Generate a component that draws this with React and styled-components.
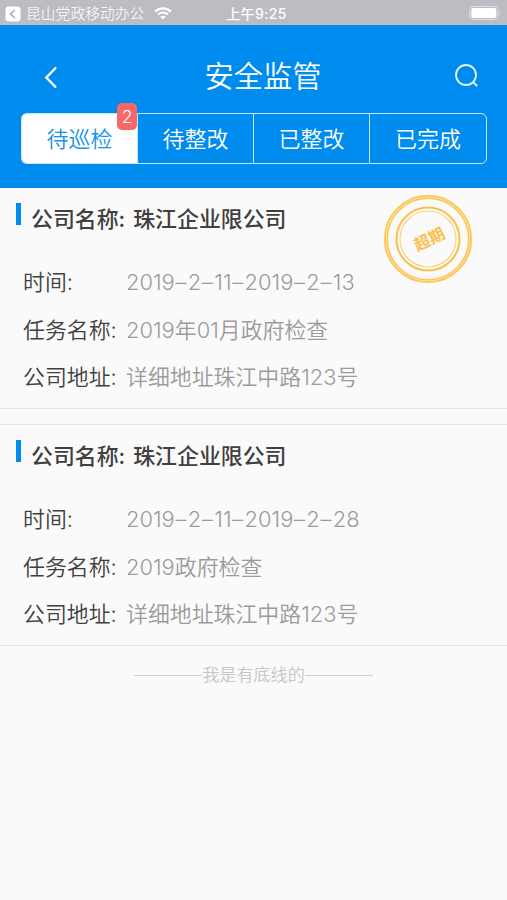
import React from 'react';
import styled, { createGlobalStyle } from 'styled-components';

const GlobalStyle = createGlobalStyle`
  * {
    box-sizing: border-box;
  }

  body {
    margin: 0;
    background: #fafafa;
    font-family: Inter, 'Noto Sans CJK SC', sans-serif;
    font-weight: 350;
  }
`

const Page = styled.div`
  min-height: 900px;
  background: #fafafa;
  overflow: hidden;
`

const StatusBar = styled.div`
  display: grid;
  grid-template-columns: 1fr auto 1fr;
  align-items: center;
  height: 25px;
  padding: 2px 4px 0 5px;
  background: #bdbcc2;
  color: #fff;
  font-size: 14.8px;
  line-height: 22px;
`

const BackToApp = styled.div`
  display: flex;
  align-items: center;
  color: #f3f3f5;

  span {
    margin: 0 10px 0 5px;
    white-space: nowrap;
  }
`

const Clock = styled.div`
  font-size: 14px;
  font-weight: 500;
  letter-spacing: 0.4px;
  padding-left: 5px;
`

const BatteryIcon = styled.svg`
  justify-self: end;
  margin-top: -1px;
`

const Header = styled.header`
  height: 163px;
  padding: 28px 20px 0 21px;
  background: #008cee;
  color: #fff;
`

const NavBar = styled.div`
  display: flex;
  align-items: center;
  justify-content: space-between;
  height: 46px;
  padding: 1px 7px 0 22px;
`

const Title = styled.h1`
  margin: 1px 0 0 13px;
  font-size: 29.3px;
  font-weight: 350;
  line-height: 46px;
`

const Tabs = styled.div`
  display: grid;
  grid-template-columns: 115px 116px 116px 1fr;
  height: 51px;
  margin-top: 14px;
  border: 1px solid #c4e7ff;
  border-radius: 6px;
`

const Tab = styled.button`
  position: relative;
  padding: 0;
  border: 0;
  border-left: ${({ $first }) => ($first ? '0' : '1px solid #c4e7ff')};
  border-radius: ${({ $first }) => ($first ? '4px 0 0 4px' : '0')};
  background: ${({ $active }) => ($active ? '#fff' : 'transparent')};
  color: ${({ $active }) => ($active ? '#1593e8' : '#fff')};
  font: inherit;
  font-size: 22px;
  line-height: 48px;
`

const Badge = styled.span`
  position: absolute;
  top: -11px;
  right: 0;
  width: 20px;
  height: 27px;
  border-radius: 5px;
  background: #f96868;
  color: #fff;
  font-size: 17.5px;
  line-height: 27px;
  text-align: center;
`

const List = styled.main`
  display: flex;
  flex-direction: column;
  gap: 15px;
`

const Card = styled.section`
  position: relative;
  height: ${({ $first }) => ($first ? '221px' : '222px')};
  padding: 15px 0 0 23px;
  border-top: ${({ $first }) => ($first ? '0' : '1px solid #e3e3e3')};
  border-bottom: 1px solid #e3e3e3;
`

const CardTitle = styled.h2`
  display: flex;
  gap: 8px;
  margin: 0 0 22px -7px;
  color: #404040;
  font-size: 21.9px;
  font-weight: 500;
  line-height: 34px;

  &::before {
    content: '';
    width: 5px;
    height: 22px;
    margin: 0 2px 0 0;
    background: #008cee;
  }

  span {
    margin-top: -1px;
    height: 35px;
  }
`

const Row = styled.div`
  display: flex;
  height: 47.7px;
  color: #404040;
  font-size: 21.9px;
  line-height: 47.7px;
`

const Label = styled.span`
  width: 103px;
`

const Value = styled.span`
  color: #9b9b9b;
`

const Dash = styled.span`
  padding-left: 0.8px;
  letter-spacing: 1.3px;
`

const Stamp = styled.svg`
  position: absolute;
  top: 6px;
  left: 383px;
`

const EndNote = styled.p`
  display: flex;
  align-items: center;
  justify-content: center;
  margin: 16px 0 0;
  color: #c6c6c6;
  font-size: 17.1px;
  line-height: 26px;

  &::before,
  &::after {
    content: '';
    width: 68.5px;
    height: 1px;
    background: #cfcfcf;
  }
`

const tabs = [
  { name: '待巡检', count: 2 },
  { name: '待整改' },
  { name: '已整改' },
  { name: '已完成' },
]

const tasks = [
  {
    company: '珠江企业限公司',
    time: '2019–2–11–2019–2–13',
    task: '2019年01月政府检查',
    address: '详细地址珠江中路123号',
    overdue: true,
  },
  {
    company: '珠江企业限公司',
    time: '2019–2–11–2019–2–28',
    task: '2019政府检查',
    address: '详细地址珠江中路123号',
  },
]

const OverdueStamp = () => (
  <Stamp width="90" height="90" viewBox="0 0 90 90" fill="none">
    <circle cx="45" cy="45" r="42" stroke="#fde2a5" strokeWidth="4.4" />
    <circle cx="45" cy="45" r="43.2" stroke="#fbc556" strokeWidth="1.5" />
    <circle cx="45" cy="45" r="40.8" stroke="#fbc556" strokeWidth="1.3" />
    <circle cx="45" cy="45" r="31.5" stroke="#fbc04a" strokeWidth="2" />
    <circle cx="45" cy="45" r="28" stroke="#fcd27e" strokeWidth="1.2" />
    <text
      x="46.5"
      y="51"
      fill="#fbc04a"
      fontSize="16"
      fontWeight="700"
      textAnchor="middle"
      transform="rotate(-26 46.5 45.5)"
    >
      超期
    </text>
  </Stamp>
)

const DateRange = ({ text }) =>
  text.split('–').map((part, i) => (
    <React.Fragment key={i}>
      {i > 0 && <Dash>–</Dash>}
      {part}
    </React.Fragment>
  ))

const TaskCard = ({ item, first }) => (
  <Card $first={first}>
    <CardTitle>
      <span>公司名称:</span>
      <span>{item.company}</span>
    </CardTitle>
    <Row><Label>时间:</Label><Value><DateRange text={item.time} /></Value></Row>
    <Row><Label>任务名称:</Label><Value>{item.task}</Value></Row>
    <Row><Label>公司地址:</Label><Value>{item.address}</Value></Row>
    {item.overdue && <OverdueStamp />}
  </Card>
)

const App = () => {
  return (
    <Page>
      <GlobalStyle />
      <StatusBar>
        <BackToApp>
          <svg width="16" height="16" viewBox="0 0 16 16" fill="none">
            <rect x="0.5" y="0.5" width="15" height="15" rx="3" fill="#fff" />
            <path d="M9.8 4L5.6 8l4.2 4" stroke="#aaa9af" strokeWidth="1.6" />
          </svg>
          <span>昆山党政移动办公</span>
          <svg width="18" height="13" viewBox="0 0 18 13" fill="none">
            <path d="M1.2 4.6C5.6.4 12.4.4 16.8 4.6" stroke="#fff" strokeWidth="2.2" />
            <path d="M4 7.5c2.9-2.7 7.1-2.7 10 0" stroke="#fff" strokeWidth="2" />
            <path d="M6.3 9.8c1.6-1.4 3.8-1.4 5.4 0L9 12.5z" fill="#fff" />
          </svg>
        </BackToApp>
        <Clock>上午9:25</Clock>
        <BatteryIcon width="34" height="14" viewBox="0 0 34 14" fill="none">
          <rect x="0.8" y="0.5" width="28" height="13" rx="3.5" stroke="#dddde0" />
          <rect x="2.3" y="2" width="25" height="10" rx="2" fill="#fff" />
          <path d="M30.3 5c1.3.6 1.3 3.4 0 4z" fill="#dddde0" />
        </BatteryIcon>
      </StatusBar>
      <Header>
        <NavBar>
          <svg width="16" height="24" viewBox="0 0 16 24" fill="none">
            <path d="M13 2.5L3.4 12.5 13 22.5" stroke="#fff" strokeWidth="2.4" />
          </svg>
          <Title>安全监管</Title>
          <svg width="26" height="28" viewBox="0 0 26 28" fill="none">
            <circle cx="12" cy="12" r="10" stroke="#e6f6ff" strokeWidth="1.8" />
            <path d="M18.8 18.8l4.4 4.2" stroke="#e6f6ff" strokeWidth="1.8" />
          </svg>
        </NavBar>
        <Tabs>
          {tabs.map((tab, i) => (
            <Tab key={tab.name} $first={i === 0} $active={i === 0}>
              {tab.name}
              {tab.count && <Badge>{tab.count}</Badge>}
            </Tab>
          ))}
        </Tabs>
      </Header>
      <List>
        {tasks.map((item, i) => (
          <TaskCard key={item.time} item={item} first={i === 0} />
        ))}
      </List>
      <EndNote>我是有底线的</EndNote>
    </Page>
  );
}

export default App;
